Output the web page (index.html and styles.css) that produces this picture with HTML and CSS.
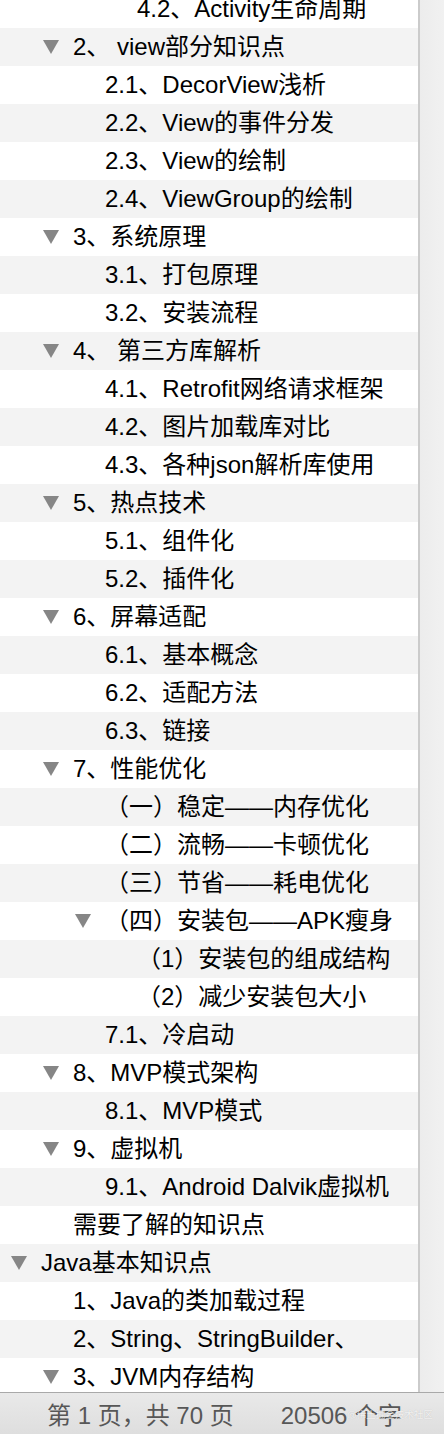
FILE: index.html
```html
<!DOCTYPE html>
<html lang="zh-CN">
<head>
  <meta charset="UTF-8" />
  <meta name="viewport" content="width=device-width, initial-scale=1.0"/>
  <title>目录</title>
  <link rel="stylesheet" href="styles.css">
</head>
<body>

  <div class="app">
    <!-- Outline pane -->
    <div class="pane">
      <ul class="outline">
        <li class="row l3"><span class="twisty"></span>4.2、Activity生命周期</li>
        <li class="row l1"><span class="twisty open"></span>2、 view部分知识点</li>
        <li class="row l2"><span class="twisty"></span>2.1、DecorView浅析</li>
        <li class="row l2"><span class="twisty"></span>2.2、View的事件分发</li>
        <li class="row l2"><span class="twisty"></span>2.3、View的绘制</li>
        <li class="row l2"><span class="twisty"></span>2.4、ViewGroup的绘制</li>
        <li class="row l1"><span class="twisty open"></span>3、系统原理</li>
        <li class="row l2"><span class="twisty"></span>3.1、打包原理</li>
        <li class="row l2"><span class="twisty"></span>3.2、安装流程</li>
        <li class="row l1"><span class="twisty open"></span>4、 第三方库解析</li>
        <li class="row l2"><span class="twisty"></span>4.1、Retrofit网络请求框架</li>
        <li class="row l2"><span class="twisty"></span>4.2、图片加载库对比</li>
        <li class="row l2"><span class="twisty"></span>4.3、各种json解析库使用</li>
        <li class="row l1"><span class="twisty open"></span>5、热点技术</li>
        <li class="row l2"><span class="twisty"></span>5.1、组件化</li>
        <li class="row l2"><span class="twisty"></span>5.2、插件化</li>
        <li class="row l1"><span class="twisty open"></span>6、屏幕适配</li>
        <li class="row l2"><span class="twisty"></span>6.1、基本概念</li>
        <li class="row l2"><span class="twisty"></span>6.2、适配方法</li>
        <li class="row l2"><span class="twisty"></span>6.3、链接</li>
        <li class="row l1"><span class="twisty open"></span>7、性能优化</li>
        <li class="row l2"><span class="twisty"></span>（一）稳定——内存优化</li>
        <li class="row l2"><span class="twisty"></span>（二）流畅——卡顿优化</li>
        <li class="row l2"><span class="twisty"></span>（三）节省——耗电优化</li>
        <li class="row l2"><span class="twisty open"></span>（四）安装包——APK瘦身</li>
        <li class="row l3"><span class="twisty"></span>（1）安装包的组成结构</li>
        <li class="row l3"><span class="twisty"></span>（2）减少安装包大小</li>
        <li class="row l2"><span class="twisty"></span>7.1、冷启动</li>
        <li class="row l1"><span class="twisty open"></span>8、MVP模式架构</li>
        <li class="row l2"><span class="twisty"></span>8.1、MVP模式</li>
        <li class="row l1"><span class="twisty open"></span>9、虚拟机</li>
        <li class="row l2"><span class="twisty"></span>9.1、Android Dalvik虚拟机</li>
        <li class="row l1"><span class="twisty"></span>需要了解的知识点</li>
        <li class="row l0"><span class="twisty open"></span>Java基本知识点</li>
        <li class="row l1"><span class="twisty"></span>1、Java的类加载过程</li>
        <li class="row l1"><span class="twisty"></span>2、String、StringBuilder、</li>
        <li class="row l1"><span class="twisty open"></span>3、JVM内存结构</li>
      </ul>
      <div class="scrollbar"></div>
    </div>

    <!-- Status bar -->
    <footer class="status">
      <span class="pages">第 1 页，共 70 页</span>
      <span class="words">20506 个字</span>
      <span class="watermark">@稀土掘金技术社区</span>
    </footer>
  </div>

</body>
</html>
```

FILE: styles.css
```css
/* Reset & Base */
* { margin:0; padding:0; box-sizing:border-box; }
html, body { height:100%; }
body {
  font-family:"Liberation Sans","Noto Sans CJK SC",sans-serif;
  background:#fff;
  color:#000;
}

/* App frame */
.app {
  display:grid; grid-template-rows:1fr 42px;
  width:444px; height:1434px;
}
.pane {
  display:flex;
  overflow:hidden;
  min-height:0;
}

/* Outline rows */
.outline {
  flex:1;
  list-style:none;
  margin-top:-10px;
}
.row {
  display:flex; align-items:center;
  height:38px;
  font-size:24px;
  line-height:28px;
  white-space:nowrap;
}
.row:nth-child(even) { background:#f3f3f3; }
.l0 { padding-left:11px; }
.l1 { padding-left:43px; }
.l2 { padding-left:75px; }
.l3 { padding-left:107px; }

.twisty {
  flex:none;
  width:30px; height:14px;
}
.twisty.open::before {
  content:"";
  display:block;
  width:0; height:0;
  border-left:8.5px solid transparent;
  border-right:8.5px solid transparent;
  border-top:14px solid #868686;
}

/* Scrollbar track */
.scrollbar {
  flex:none;
  width:26px;
  border-left:2px solid #cbcbcb;
  background:linear-gradient(90deg,#ececec,#f1f1f1);
}

/* Status bar */
.status {
  position:relative;
  display:flex; align-items:center;
  padding-left:47px;
  border-top:1px solid #a9a9a9;
  background:linear-gradient(#e9e9e9,#dedede);
  color:#575757;
  font-size:24px;
}
.words { margin-left:47px; }
.watermark {
  position:absolute; left:347px; top:14px;
  font-size:9.5px;
  color:rgba(255,255,255,0.8);
  text-shadow:0 0 1px rgba(0,0,0,0.2);
}
```
